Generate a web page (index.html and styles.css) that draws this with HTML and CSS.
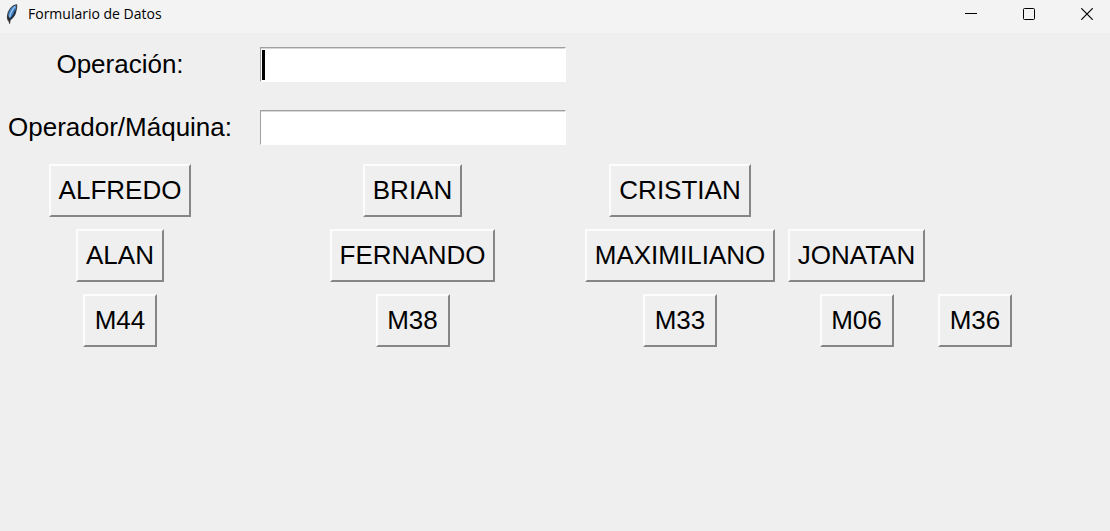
FILE: index.html
```html
<!DOCTYPE html>
<html lang="es">
<head>
<meta charset="utf-8">
<title>Formulario de Datos</title>
<link rel="stylesheet" href="styles.css">
</head>
<body>
<header class="titlebar">
  <svg class="feather" width="16" height="20" viewBox="0 0 16 20" aria-hidden="true">
    <path d="M12.600.8C9 1.200 5.500 4.500 4.200 8.500c-.9 2.800-1 5.500-.2 7.500l2.500-.4C9.500 13.500 11.300 10.500 11.900 7c.4-2.500 1.300-4 .7-6.200z" fill="#3f7fc4" stroke="#3a3f45" stroke-width="1.100"/>
    <path d="M11.300 2.500C8.500 5 6.500 9 5.600 13" fill="none" stroke="#9cc6ee" stroke-width="1.300"/>
    <path d="M11.500 6.500C10.500 10 9 12.500 6.500 15" fill="none" stroke="#1b2733" stroke-width="1.300"/>
    <path d="M3.800 11.500l.6 4 1.200 4 .7-4.500" fill="#222" stroke="#333" stroke-width=".9"/>
  </svg>
  <h1 class="title">Formulario de Datos</h1>
  <div class="controls">
    <button class="control" type="button" aria-label="Minimizar"><svg width="12" height="12" viewBox="0 0 12 12"><path d="M0 5.500h12" stroke="#000"/></svg></button>
    <button class="control" type="button" aria-label="Maximizar"><svg width="12" height="12" viewBox="0 0 12 12"><rect x=".5" y=".5" width="11" height="11" rx="1" fill="none" stroke="#000"/></svg></button>
    <button class="control" type="button" aria-label="Cerrar"><svg width="12" height="12" viewBox="0 0 12 12"><path d="M.3.3l11.400 11.400M11.700.3L.3 11.700" stroke="#000" stroke-width="1.200"/></svg></button>
  </div>
</header>
<main>
  <form class="form">
    <label class="label" for="operacion">Operación:</label>
    <div class="field"><input class="entry" id="operacion" type="text"><span class="caret"></span></div>
    <label class="label row-start" for="operador">Operador/Máquina:</label>
    <div class="field"><input class="entry" id="operador" type="text"></div>
    <button class="choice row-start" type="button">ALFREDO</button>
    <button class="choice" type="button">BRIAN</button>
    <button class="choice" type="button">CRISTIAN</button>
    <button class="choice row-start" type="button">ALAN</button>
    <button class="choice" type="button">FERNANDO</button>
    <button class="choice" type="button">MAXIMILIANO</button>
    <button class="choice" type="button">JONATAN</button>
    <button class="choice row-start" type="button">M44</button>
    <button class="choice" type="button">M38</button>
    <button class="choice" type="button">M33</button>
    <button class="choice" type="button">M06</button>
    <button class="choice" type="button">M36</button>
  </form>
</main>
</body>
</html>
```
FILE: styles.css
```css
* {
  box-sizing: border-box;
}

body {
  margin: 0;
  min-height: 100vh;
  background: #efefef;
  color: #000;
  font-family: "Liberation Sans", Arial, sans-serif;
}

.titlebar {
  display: flex;
  align-items: center;
  height: 33px;
  padding: 0 0 5px 4px;
  background: #f3f3f3;
}

.feather {
  flex: none;
  margin-right: 8px;
}

.title {
  margin: 0;
  font: 400 14px/20px "Open Sans", "Noto Sans", sans-serif;
}

.controls {
  display: flex;
  margin-left: auto;
  margin-right: -6px;
}

.control {
  display: flex;
  align-items: center;
  justify-content: center;
  width: 58px;
  height: 28px;
  padding: 0;
  border: 0;
  background: none;
}

.form {
  display: grid;
  grid-template-columns: 240px 321px 190px 139px 74px;
  grid-template-rows: 51px 50px;
  gap: 12px;
  align-items: center;
  justify-items: center;
  padding-top: 6px;
  font-size: 26px;
  line-height: 39px;
}

.row-start {
  grid-column-start: 1;
}

.field {
  position: relative;
  display: flex;
}

.entry {
  width: 306px;
  height: 35px;
  padding: 0 4px;
  border: 1px solid;
  border-color: #a0a0a0 #fff #fff #a0a0a0;
  background: #fff;
  box-shadow: inset 0 1px #d8d8d8;
  font: inherit;
  outline: 0;
}

.caret {
  position: absolute;
  top: 3px;
  left: 2px;
  width: 3px;
  height: 30px;
  background: #000;
}

.choice {
  min-width: 74px;
  padding: 5px 8px;
  border: 2px solid;
  border-color: #fcfcfc #868686 #868686 #fcfcfc;
  background: #efefef;
  color: #000;
  font: inherit;
}
```
